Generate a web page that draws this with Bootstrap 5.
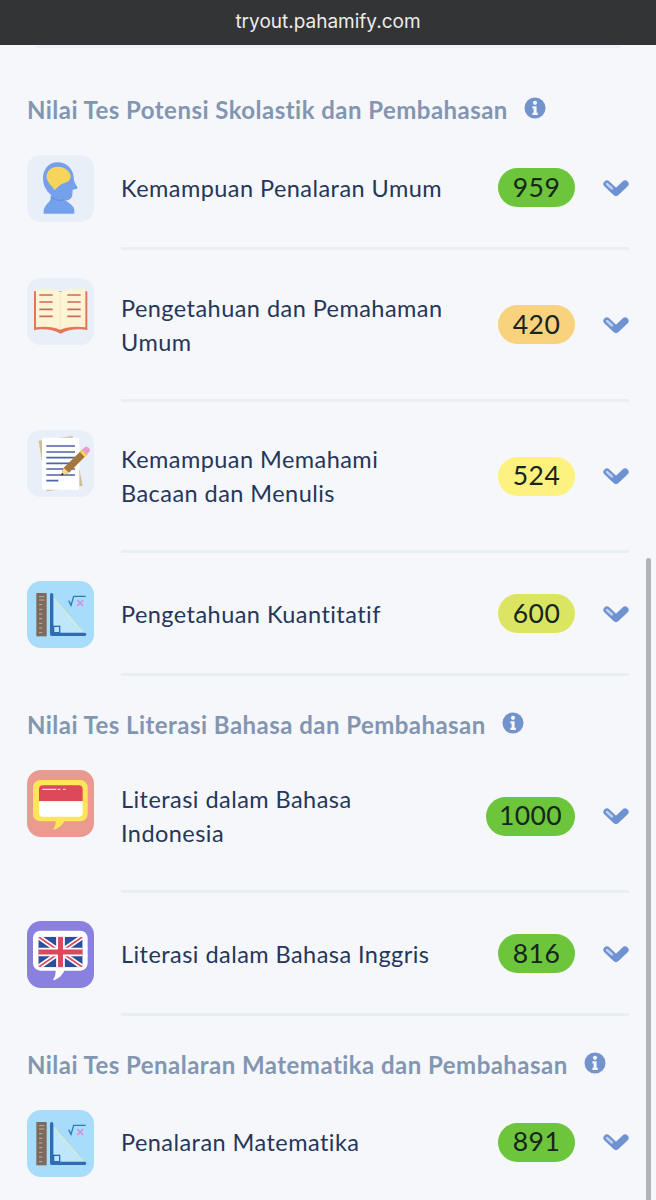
<!DOCTYPE html>
<html lang="en">

<head>
    <meta charset="UTF-8">
    <meta name="viewport" content="width=device-width, initial-scale=1.0">
    <title>Nilai Tes</title>
    <link href="https://cdn.jsdelivr.net/npm/bootstrap@5.3.0/dist/css/bootstrap.min.css" rel="stylesheet">
    <style>
        html, body { height: 1200px; overflow: hidden; }
        body { background: #f5f7fb; font-family: "Lato", "Liberation Sans", sans-serif; position: relative; }
        .url-bar { height: 45px; background: #333435; color: #ececec; font-family: "Inter", "Liberation Sans", sans-serif; font-size: 19px; }
        .top-line { height: 3px; margin: 0 36px; background: #eef1f6; }
        .scores { padding: 0 27px; }
        .sec-head { color: #8396b1; font-size: 24px; font-weight: 700; line-height: 30px; letter-spacing: .46px; padding-top: 33.5px; margin-bottom: 30px; }
        .sec-first { padding-top: 47px; }
        .info-ico { width: 22px; height: 22px; flex: none; margin-top: -4px; }
        .score-row { padding-bottom: 25px; }
        .tile { width: 67px; height: 67px; flex: none; border-radius: 14px; display: block; }
        .subject { width: 330px; padding: 12.75px 0 14.75px; margin-left: 27px; color: #25365a; font-size: 23.5px; line-height: 34px; letter-spacing: .45px; flex: none; }
        .tile-top { align-self: flex-start; }
        .score-pill { height: 39px; min-width: 77px; padding: 0 13px; margin-bottom: 2px; color: #16261c; font-size: 26.5px; letter-spacing: .4px; }
        .chev { width: 26px; height: 20px; flex: none; margin-left: 28px; margin-bottom: 2px; }
        .sep { height: 3px; margin-left: 94px; background: #e9eef5; }
        .sep-gap { margin-bottom: 28px; }
        .s-green { background: #6cc53a; }
        .s-orange { background: #f9d27d; }
        .s-yellow { background: #fdf17f; }
        .s-lime { background: #dce562; }
        .fake-scroll { position: absolute; right: 5px; top: 558px; bottom: 0; width: 5px; background: #b2b3b7; border-radius: 3px 3px 0 0; }
    </style>
</head>

<body>
    <svg width="0" height="0" class="position-absolute">
        <symbol id="chevron" viewBox="0 0 26 20">
            <path d="M4 6 13 14.500 22 6" fill="none" stroke="#6f92d2" stroke-width="7.200" stroke-linecap="round" stroke-linejoin="round"/>
            <path d="M4 6 9 10.500" stroke="#c3d2ec" stroke-width="2.400" stroke-linecap="round"/>
        </symbol>
        <symbol id="info" viewBox="0 0 22 22">
            <circle cx="11" cy="11" r="10.500" fill="#7393cd"/>
            <circle cx="11" cy="5.800" r="2.100" fill="#f5f7fb"/>
            <path d="M8.400 9.200h4.200v6.600h1.200v2.200H8.400v-2.200h1.200v-4.400H8.400z" fill="#f5f7fb"/>
        </symbol>
        <symbol id="math" viewBox="36 33 201 201">
            <rect x="36" y="33" width="201" height="201" fill="#a8dcfb"/>
            <rect x="64" y="69" width="31" height="130" fill="#7d6a5c"/>
            <path d="M72 80h16M72 90h16M72 104h10M72 118h10M72 132h10M72 146h10M72 160h10M72 174h10M72 188h10" stroke="#c9bca8" stroke-width="2.500"/>
            <path d="M116 85 205 188H116z" fill="#bfe7fb"/>
            <path d="M116 85 205 188" stroke="#e6f0b8" stroke-width="4" stroke-dasharray="6 3"/>
            <path d="M110 74V193H209" fill="none" stroke="#2f6cb5" stroke-width="10" stroke-linecap="round" stroke-linejoin="round"/>
            <rect x="116" y="169" width="18" height="19" fill="none" stroke="#2f6cb5" stroke-width="4"/>
            <path d="M161 92 168 106 176 79H212" fill="none" stroke="#3178b8" stroke-width="4"/>
            <path d="M187 90 204 108M204 90 187 108" stroke="#d68de0" stroke-width="5"/>
        </symbol>
    </svg>

    <div class="url-bar d-flex align-items-center justify-content-center">tryout.pahamify.com</div>
    <div class="top-line"></div>

    <div class="scores">
        <div class="sec-head sec-first d-flex align-items-center gap-3">Nilai Tes Potensi Skolastik dan Pembahasan
            <svg class="info-ico"><use href="#info"/></svg>
        </div>

        <div class="score-row d-flex align-items-center">
            <svg class="tile tile-top" viewBox="36 30 201 201">
                <rect x="36" y="30" width="201" height="201" fill="#e9eff8"/>
                <path d="M128 52C100 52 84 74 84 100 84 122 94 138 108 150 110 165 100 172 92 182 86 190 85 198 86 206H178V194C176 182 160 172 150 166 162 168 172 160 172 148 172 142 174 138 172 134 180 134 190 132 187 126 180 116 176 108 176 96 174 70 152 52 128 52Z" fill="#74a0ec"/>
                <path d="M95 100C92 82 106 65 128 65 150 65 168 80 167 96 166 112 148 112 136 120 126 126 124 132 118 136 114 124 100 118 95 100Z" fill="#f8d45c"/>
                <path d="M106 156C122 166 136 168 148 164" fill="none" stroke="#5f88d0" stroke-width="2.500"/>
            </svg>
            <div class="subject">Kemampuan Penalaran Umum</div>
            <div class="score-pill s-green rounded-pill d-flex align-items-center justify-content-center ms-auto">959</div>
            <svg class="chev"><use href="#chevron"/></svg>
        </div>
        <div class="sep sep-gap"></div>

        <div class="score-row d-flex align-items-center">
            <svg class="tile tile-top" viewBox="81 55 201 201">
                <rect x="81" y="55" width="201" height="201" fill="#e9eff8"/>
                <path d="M102 95H262V212C240 206 205 208 182 222 158 208 124 206 102 212Z" fill="#e5765a"/>
                <path d="M108 88C135 84 165 88 181 97 197 88 228 84 256 88V203C230 199 200 201 181 210 162 201 132 199 108 203Z" fill="#fdf4d4"/>
                <path d="M181 97V210" stroke="#e8dfc0" stroke-width="2"/>
                <path d="M118 106H158M118 127H158M118 149H158M118 170H158M202 106H242M202 127H242M202 149H242M202 170H242" stroke="#c96a5e" stroke-width="5"/>
            </svg>
            <div class="subject">Pengetahuan dan Pemahaman Umum</div>
            <div class="score-pill s-orange rounded-pill d-flex align-items-center justify-content-center ms-auto">420</div>
            <svg class="chev"><use href="#chevron"/></svg>
        </div>
        <div class="sep sep-gap"></div>

        <div class="score-row d-flex align-items-center">
            <svg class="tile tile-top" viewBox="81 508 201 201">
                <rect x="81" y="508" width="201" height="201" fill="#e9eff8"/>
                <path d="M116 540 218 526 248 675 140 692Z" fill="#cdbf95"/>
                <rect x="126" y="531" width="112" height="156" rx="5" fill="#fff"/>
                <path d="M139 556H225M139 574H225M139 591H225M139 608H225M139 625H225M139 643H225M139 660H175" stroke="#4f63a8" stroke-width="5"/>
                <path d="M183 645 191 621 248 566 262 581 207 636Z" fill="#a5763c"/>
                <path d="M183 645 191 621 207 636Z" fill="#f3d98a"/>
                <path d="M183 645 186 636 192 642Z" fill="#222"/>
                <path d="M240 574 248 566 262 581 254 589Z" fill="#f6dc3e"/>
                <path d="M246 568 254 560C258 557 264 559 267 563 270 567 270 570 268 573L260 583Z" fill="#ea9ad0"/>
            </svg>
            <div class="subject">Kemampuan Memahami Bacaan dan Menulis</div>
            <div class="score-pill s-yellow rounded-pill d-flex align-items-center justify-content-center ms-auto">524</div>
            <svg class="chev"><use href="#chevron"/></svg>
        </div>
        <div class="sep sep-gap"></div>

        <div class="score-row d-flex align-items-center">
            <svg class="tile tile-top"><use href="#math"/></svg>
            <div class="subject">Pengetahuan Kuantitatif</div>
            <div class="score-pill s-lime rounded-pill d-flex align-items-center justify-content-center ms-auto">600</div>
            <svg class="chev"><use href="#chevron"/></svg>
        </div>
        <div class="sep"></div>

        <div class="sec-head d-flex align-items-center gap-3">Nilai Tes Literasi Bahasa dan Pembahasan
            <svg class="info-ico"><use href="#info"/></svg>
        </div>

        <div class="score-row d-flex align-items-center">
            <svg class="tile tile-top" viewBox="36 28 201 201">
                <rect x="36" y="28" width="201" height="201" fill="#ea9a8e"/>
                <path d="M76 58H196A22 22 0 0 1 218 80V160A22 22 0 0 1 196 182H148C140 196 128 206 113 208 120 200 122 192 122 182H76A22 22 0 0 1 54 160V80A22 22 0 0 1 76 58Z" fill="#fde65a"/>
                <path d="M84 74H191A12 12 0 0 1 203 86V122H72V86A12 12 0 0 1 84 74Z" fill="#dc4a5a"/>
                <path d="M72 122H203V156A12 12 0 0 1 191 168H84A12 12 0 0 1 72 156Z" fill="#fff"/>
                <path d="M82 86H124M128 86H136M144 86H152" stroke="#fff" stroke-width="3"/>
            </svg>
            <div class="subject">Literasi dalam Bahasa Indonesia</div>
            <div class="score-pill s-green rounded-pill d-flex align-items-center justify-content-center ms-auto">1000</div>
            <svg class="chev"><use href="#chevron"/></svg>
        </div>
        <div class="sep sep-gap"></div>

        <div class="score-row d-flex align-items-center">
            <svg class="tile tile-top" viewBox="36 33 201 201">
                <defs><clipPath id="ukClip"><rect x="70" y="80" width="133" height="92" rx="6"/></clipPath></defs>
                <rect x="36" y="33" width="201" height="201" fill="#8a80e0"/>
                <path d="M76 62H196A22 22 0 0 1 218 84V160A22 22 0 0 1 196 182H148C140 198 128 208 113 211 120 202 122 192 122 182H76A22 22 0 0 1 54 160V84A22 22 0 0 1 76 62Z" fill="#fff"/>
                <g clip-path="url(#ukClip)">
                    <rect x="70" y="80" width="133" height="92" fill="#2a4f9c"/>
                    <path d="M70 80 203 172M203 80 70 172" stroke="#fff" stroke-width="15"/>
                    <path d="M70 80 203 172M203 80 70 172" stroke="#d84a5c" stroke-width="5"/>
                    <path d="M136.500 80V172M70 126H203" stroke="#fff" stroke-width="26"/>
                    <path d="M136.500 80V172M70 126H203" stroke="#d84a5c" stroke-width="15"/>
                </g>
            </svg>
            <div class="subject">Literasi dalam Bahasa Inggris</div>
            <div class="score-pill s-green rounded-pill d-flex align-items-center justify-content-center ms-auto">816</div>
            <svg class="chev"><use href="#chevron"/></svg>
        </div>
        <div class="sep"></div>

        <div class="sec-head d-flex align-items-center gap-3">Nilai Tes Penalaran Matematika dan Pembahasan
            <svg class="info-ico"><use href="#info"/></svg>
        </div>

        <div class="score-row d-flex align-items-center">
            <svg class="tile tile-top"><use href="#math"/></svg>
            <div class="subject">Penalaran Matematika</div>
            <div class="score-pill s-green rounded-pill d-flex align-items-center justify-content-center ms-auto">891</div>
            <svg class="chev"><use href="#chevron"/></svg>
        </div>
    </div>

    <div class="fake-scroll"></div>

    <script src="https://cdn.jsdelivr.net/npm/bootstrap@5.3.0/dist/js/bootstrap.bundle.min.js"></script>
</body>

</html>
